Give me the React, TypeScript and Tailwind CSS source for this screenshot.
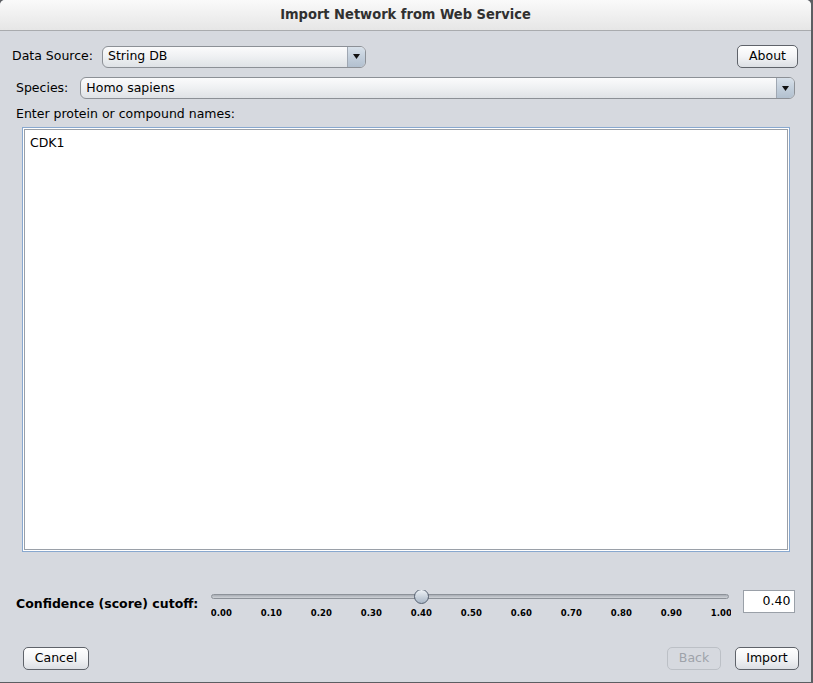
import React, { useState } from 'react';

const font = "font-['DejaVu_Sans',sans-serif]";

// Nimbus-style combo box
const Combo = ({ value, className }: { value: string; className: string }) => (
  <div
    className={`flex items-stretch h-[22px] rounded-[6px] border border-[#8c9096] bg-gradient-to-b from-[#fbfbfc] via-[#eef0f2] to-[#dfe2e6] overflow-hidden ${className}`}
  >
    <span className="flex-1 flex items-center pl-[5px] text-[12.5px] text-black">{value}</span>
    <span className="w-[18px] flex items-center justify-center border-l border-[#9fa7b2] bg-gradient-to-b from-[#d8e1ea] via-[#c3cfdc] to-[#b2c0cf]">
      <svg width="7" height="5" viewBox="0 0 7 5">
        <path d="M0 0h7L3.5 5z" fill="#111" />
      </svg>
    </span>
  </div>
);

const Btn = ({ label, disabled, className }: { label: string; disabled?: boolean; className: string }) => (
  <button
    disabled={disabled}
    className={`h-[23px] rounded-[5px] border text-[12.5px] leading-none ${
      disabled
        ? 'border-[#bcc0c6] bg-[#d6d9df] text-[#9ea3aa]'
        : 'border-[#5f636a] bg-gradient-to-b from-[#ffffff] via-[#f3f4f6] to-[#dcdfe4] text-black'
    } ${className}`}
  >
    {label}
  </button>
);

const ticks = ['0.00', '0.10', '0.20', '0.30', '0.40', '0.50', '0.60', '0.70', '0.80', '0.90', '1.00'];

export default function App() {
  const [names, setNames] = useState('CDK1');
  const [cutoff] = useState(0.4);

  return (
    <div className={`w-[813px] h-[683px] bg-[#5c5e62] ${font}`}>
      <div className="w-[811px] h-[682px] flex flex-col bg-[#d6d9df] rounded-t-[5px] overflow-hidden">
        {/* title bar */}
        <div className="h-[31px] shrink-0 flex items-center justify-center border-b border-[#a9abae] bg-gradient-to-b from-[#fafafa] to-[#e6e6e6]">
          <span className="font-['DejaVu_Sans_Condensed',sans-serif] font-semibold text-[14.5px] text-[#303030]">
            Import Network from Web Service
          </span>
        </div>

        {/* data source row */}
        <div className="flex items-center pl-[12px] pr-[13px] mt-[14px]">
          <span className="text-[12.5px] text-black">Data Source:</span>
          <Combo value="String DB" className="ml-[9px] w-[264px]" />
          <div className="flex-1" />
          <Btn label="About" className="w-[61px]" />
        </div>

        {/* species row */}
        <div className="flex items-center pl-[16px] pr-[16px] mt-[9px]">
          <span className="text-[12.5px] text-black">Species:</span>
          <Combo value="Homo sapiens" className="ml-[12px] flex-1 h-[21px]" />
        </div>

        <div className="pl-[16px] mt-[7px] text-[12.5px] leading-[16px] text-black">Enter protein or compound names:</div>

        {/* names text area */}
        <div className="ml-[22px] mr-[21px] mt-[5px] h-[425px] border border-[#88a8cf] p-px bg-white">
          <textarea
            value={names}
            onChange={(e) => setNames(e.target.value)}
            className="w-full h-full resize-none outline-none border border-[#9aa0a8] px-[5px] pt-[4px] text-[12.5px] text-black"
          />
        </div>

        {/* confidence cutoff */}
        <div className="flex items-start mt-[38px]">
          <span className="ml-[16px] mt-[5px] text-[12.5px] font-bold text-black">Confidence (score) cutoff:</span>
          <div className="relative ml-[13px] w-[520px] h-[30px] overflow-hidden">
            <div className="mt-[4px] w-[518px] h-[5px] rounded-full border border-[#8d9299] bg-gradient-to-b from-[#a8adb4] to-[#d0d3d8]" />
            <div
              className="absolute top-[-1px] w-[15px] h-[15px] rounded-full border border-[#556070] bg-gradient-to-b from-[#eef2f6] to-[#aab7c6]"
              style={{ left: 10 + cutoff * 500 - 7.5 }}
            />
            <div className="flex -ml-[15px] mt-[10px]">
              {ticks.map((t) => (
                <span key={t} className="w-[50px] shrink-0 text-center text-[8.5px] font-semibold leading-none text-black">
                  {t}
                </span>
              ))}
            </div>
          </div>
          <div className="ml-[12px] w-[52px] h-[23px] border border-[#9aa0a8] bg-white flex items-center justify-end pr-[4px] text-[12.5px] text-black">
            {cutoff.toFixed(2)}
          </div>
        </div>

        {/* buttons */}
        <div className="flex items-center mt-[27px] pl-[23px] pr-[12px]">
          <Btn label="Cancel" className="w-[66px]" />
          <div className="flex-1" />
          <Btn label="Back" disabled className="w-[54px]" />
          <Btn label="Import" className="ml-[14px] w-[64px]" />
        </div>
      </div>
    </div>
  );
}
